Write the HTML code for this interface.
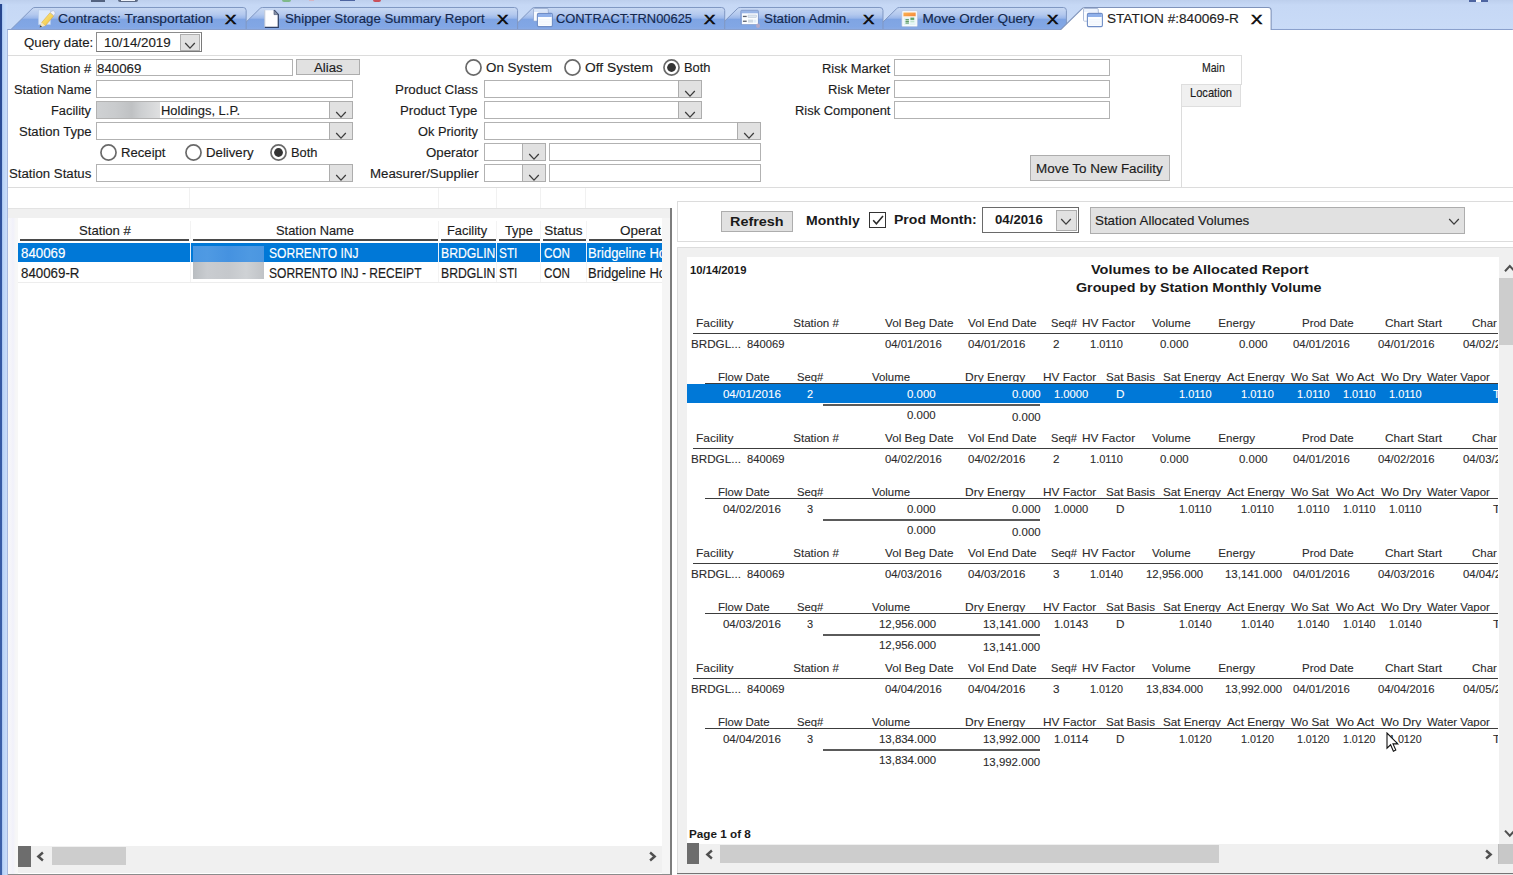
<!DOCTYPE html>
<html lang="en"><head><meta charset="utf-8"><title>STATION #:840069-R</title>
<style>
html,body{margin:0;padding:0}
body{width:1513px;height:875px;overflow:hidden;background:#fff;position:relative;font-family:"Liberation Sans", sans-serif;}
#app{position:absolute;left:0;top:0;width:1513px;height:875px;overflow:hidden;background:#fff}
#app div,#app svg{position:absolute;box-sizing:border-box}
.t{position:absolute;white-space:pre;transform-origin:0 0;-webkit-text-stroke:0.15px currentColor}
.inp{background:#fff;border:1px solid #b2b2b2}
.btn{background:#e1e1e1;border:1px solid #adadad}
.clip{overflow:hidden}
</style></head><body><div id="app">
<div style="left:0px;top:0px;width:1513px;height:30.4px;background:linear-gradient(#bdcfed 0,#c6d8f5 5px,#c9dbf7 30px)"></div>
<div style="left:0px;top:4px;width:1.6px;height:871px;background:linear-gradient(#27468f 0,#3357a2 300px,#3d61a9 871px)"></div>
<div style="left:1.6px;top:4px;width:6.4px;height:26px;background:linear-gradient(90deg,#a4c2f0 0,#bcd5f8 1.5px,#c8dcf9 4.5px,#cbd9f3 6.4px)"></div>
<div style="left:1.6px;top:30px;width:6.4px;height:845px;background:linear-gradient(90deg,#a4c2f0 0,#bcd5f8 1.5px,#c8dcf9 4.5px,#a5b6dc 5.6px,#8d9fc6 6.4px)"></div>
<div style="left:90.6px;top:0px;width:14.8px;height:1.5px;background:#53627f"></div>
<div style="left:118px;top:0px;width:20px;height:1.8px;background:#5d6a84;border-radius:0 0 6px 6px"></div>
<div style="left:121px;top:0px;width:14px;height:1px;background:#eef2fa"></div>
<div style="left:282px;top:0px;width:9.4px;height:1.6px;background:#7fb98a;border-radius:0 0 5px 5px"></div>
<div style="left:309.4px;top:0px;width:4.2px;height:1.2px;background:#d7b5c4"></div>
<div style="left:340px;top:0px;width:15px;height:1.4px;background:#4d64a0"></div>
<div style="left:372.8px;top:0px;width:8.5px;height:1.5px;background:#c9505a;border-radius:0 0 4px 4px"></div>
<div style="left:1468.5px;top:0px;width:19px;height:1.5px;background:#4d64a0"></div>
<div style="left:1476px;top:0px;width:5px;height:1.5px;background:#f2f5fb"></div>
<svg width="1513" height="30.4" viewBox="0 0 1513 30.4" style="left:0;top:0;overflow:hidden"><defs><linearGradient id="tg" x1="0" y1="0" x2="0" y2="1"><stop offset="0" stop-color="#cadaf3"/><stop offset="0.30" stop-color="#b4c9ee"/><stop offset="0.46" stop-color="#9cb8ea"/><stop offset="0.52" stop-color="#7fa4e3"/><stop offset="0.85" stop-color="#82a7e5"/><stop offset="1" stop-color="#8eaee6"/></linearGradient></defs><path d="M874.5,30.4 L896.5,8.8 Q897.5,7.5 899.5,7.5 H1063.5 Q1066.5,7.5 1066.5,10.5 V30.4 Z" fill="url(#tg)" stroke="#8097c2" stroke-width="1"/><path d="M715.2,30.4 L737.2,8.8 Q738.2,7.5 740.2,7.5 H880.0 Q883.0,7.5 883.0,10.5 V30.4 Z" fill="url(#tg)" stroke="#8097c2" stroke-width="1"/><path d="M509.8,30.4 L531.8,8.8 Q532.8,7.5 534.8,7.5 H721.7 Q724.7,7.5 724.7,10.5 V30.4 Z" fill="url(#tg)" stroke="#8097c2" stroke-width="1"/><path d="M237.5,30.4 L259.5,8.8 Q260.5,7.5 262.5,7.5 H514.5 Q517.5,7.5 517.5,10.5 V30.4 Z" fill="url(#tg)" stroke="#8097c2" stroke-width="1"/><path d="M9.8,30.4 L31.8,8.8 Q32.8,7.5 34.8,7.5 H243.0 Q246.0,7.5 246.0,10.5 V30.4 Z" fill="url(#tg)" stroke="#8097c2" stroke-width="1"/><rect x="7" y="29" width="1506" height="1.4" fill="#8aa0cc"/><path d="M1060.0,30.4 L1082.0,8.8 Q1083.0,7.5 1085.0,7.5 H1268.3 Q1271.3,7.5 1271.3,10.5 V30.4 Z" fill="#ffffff" stroke="none"/><path d="M1060.0,30.4 L1082.0,8.8 Q1083.0,7.5 1085.0,7.5 H1268.3 Q1271.3,7.5 1271.3,10.5 V30.4" fill="none" stroke="#7f93ba" stroke-width="1.1"/></svg>
<svg width="20" height="20" viewBox="0 0 20 20" style="left:36.5px;top:9px"><defs><linearGradient id="pg" x1="0" y1="0" x2="1" y2="1"><stop offset="0" stop-color="#f8e98a"/><stop offset="0.55" stop-color="#f5d35c"/><stop offset="1" stop-color="#eeb044"/></linearGradient></defs><rect x="1.6" y="0.9" width="11.8" height="14.6" fill="#dce9fb" stroke="#b9cdec" stroke-width="0.7"/><path d="M4.6,13.6 L13.2,3.6 L16.9,6.7 L8.3,16.8 Z" fill="url(#pg)" stroke="#d9a441" stroke-width="0.5"/><path d="M4.6,13.6 L8.3,16.8 L2.7,18.4 Z" fill="#f7e6b5"/><path d="M3.5,16.2 L5,17.7 L2.6,18.4 Z" fill="#3b3b3b"/><path d="M13.2,3.6 L14.9,1.9 Q16.8,1.3 17.9,2.9 Q18.7,4.6 16.9,6.7 Z" fill="#f4f5fa" stroke="#aeb6cc" stroke-width="0.6"/></svg>
<svg width="17" height="20" viewBox="0 0 17 20" style="left:263px;top:9px"><path d="M1.6,1.2 H11 L15.3,5.4 V18.4 H1.6 Z" fill="#fdfdff"/><path d="M1.8,1.2 V18.2" fill="none" stroke="#b4bccd" stroke-width="0.8"/><path d="M11.2,1.2 L15.3,5.4 V18.4 H1.8" fill="none" stroke="#2d3f66" stroke-width="1.25"/><path d="M11,1 V5.6 H15.3 Z" fill="#8a93a8" stroke="#3b4a6b" stroke-width="0.6"/></svg>
<svg width="21" height="20" viewBox="0 0 21 20" style="left:533.2px;top:7.9px"><rect x="0.5" y="0.5" width="14.8" height="12.6" rx="1.2" fill="rgba(226,237,252,0.7)" stroke="rgba(150,168,204,0.85)" stroke-width="0.9"/><rect x="1" y="4" width="13.8" height="8.6" fill="rgba(255,255,255,0.85)"/><rect x="4.4" y="5.4" width="15" height="13.2" rx="1.3" fill="#fbfdff" stroke="#6f8dc6" stroke-width="1.1"/><rect x="5" y="6" width="13.8" height="3" fill="#8fb0ea"/><path d="M6,11.8 H17.6 M6,14 H17.6 M6,16.2 H17.6" stroke="#e4ecf8" stroke-width="0.6"/></svg>
<svg width="21" height="20" viewBox="0 0 21 20" style="left:1083px;top:7.9px"><rect x="0.5" y="0.5" width="14.8" height="12.6" rx="1.2" fill="rgba(226,237,252,0.7)" stroke="rgba(150,168,204,0.85)" stroke-width="0.9"/><rect x="1" y="4" width="13.8" height="8.6" fill="rgba(255,255,255,0.85)"/><rect x="4.4" y="5.4" width="15" height="13.2" rx="1.3" fill="#fbfdff" stroke="#6f8dc6" stroke-width="1.1"/><rect x="5" y="6" width="13.8" height="3" fill="#8fb0ea"/><path d="M6,11.8 H17.6 M6,14 H17.6 M6,16.2 H17.6" stroke="#e4ecf8" stroke-width="0.6"/></svg>
<svg width="21" height="20" viewBox="0 0 21 20" style="left:740px;top:9px"><rect x="0.8" y="1.3" width="17.6" height="14.2" rx="1" fill="rgba(125,160,222,0.55)" stroke="#7d96c6" stroke-width="0.8"/><rect x="1.9" y="4.3" width="16" height="10.9" fill="#fbfdff"/><rect x="2.9" y="6.8" width="3.8" height="1.3" fill="#5d616e"/><rect x="8" y="6" width="8.4" height="2.6" fill="#dde6f1" stroke="#a9b6c8" stroke-width="0.4"/><rect x="2.9" y="11.6" width="3.8" height="1.3" fill="#5d616e"/><rect x="8" y="10.6" width="5" height="3" fill="#cfd9e4"/><rect x="13.4" y="10.6" width="3" height="3" fill="#e3eefa"/><ellipse cx="18" cy="16.8" rx="2" ry="2.2" fill="#c7a9bc" opacity="0.7"/></svg>
<svg width="18" height="19" viewBox="0 0 18 19" style="left:901px;top:9.5px"><defs><linearGradient id="og" x1="0" y1="0" x2="1" y2="1"><stop offset="0" stop-color="#fbb553"/><stop offset="1" stop-color="#f4853a"/></linearGradient></defs><rect x="0.9" y="0.7" width="15.4" height="15.9" rx="0.8" fill="#fdfeff" stroke="#b8c6e0" stroke-width="0.7"/><rect x="2.4" y="2.5" width="12.3" height="3.8" fill="url(#og)"/><rect x="2.4" y="6.3" width="12.3" height="0.9" fill="#fde3c4"/><rect x="2.6" y="7.6" width="12" height="7.6" fill="#e2f3f4"/><rect x="4.5" y="9" width="3.4" height="4.8" fill="#5f9b68"/><rect x="9.4" y="7.6" width="3.8" height="2.6" fill="#5fa46a"/><rect x="9.4" y="10.8" width="3.8" height="1.8" fill="#bfe3cf"/><path d="M2.6,10.4 H14.6 M2.6,12.8 H14.6 M8.6,7.6 V15.2" stroke="#f4fbfb" stroke-width="0.6"/></svg>
<div style="left:95.6px;top:31.8px;width:106.6px;height:20.4px;background:#fff;border:1px solid #7a7a7a;border-top-color:#8c8c8c;border-left-color:#8c8c8c"></div>
<div class="btn" style="left:179.5px;top:33.5px;width:20.5px;height:17.5px;"></div>
<svg width="12" height="8" viewBox="0 0 12 8" style="left:184px;top:41.5px"><path d="M1.2,1 L6,6.2 L10.8,1" fill="none" stroke="#3c3c3c" stroke-width="1.25"/></svg>
<div style="left:8px;top:54.5px;width:1234.2px;height:1px;background:#dcdcdc"></div>
<div style="left:1241.4px;top:54.5px;width:1px;height:29.5px;background:#dcdcdc"></div>
<div style="left:8px;top:186.5px;width:1505px;height:1px;background:#dcdcdc"></div>
<div style="left:1181px;top:83.5px;width:1px;height:103.5px;background:#dcdcdc"></div>
<div style="left:1181px;top:83.5px;width:61px;height:1px;background:#dcdcdc"></div>
<div style="left:1181px;top:83.5px;width:59.5px;height:23px;background:#f0f0f0;border:1px solid #dedede"></div>
<div class="inp" style="left:95.7px;top:58.7px;width:197.3px;height:17.8px;"></div>
<div class="btn" style="left:295.6px;top:58.7px;width:64.5px;height:16.5px;"></div>
<div class="inp" style="left:95.7px;top:80px;width:256.9px;height:17.8px;"></div>
<div class="inp" style="left:95.7px;top:101.2px;width:256.9px;height:17.8px;"></div>
<div class="btn" style="left:328.6px;top:101.2px;width:24px;height:17.8px;"></div>
<svg width="12" height="8" viewBox="0 0 12 8" style="left:334.6px;top:111.2px"><path d="M1.2,1 L6,6.2 L10.8,1" fill="none" stroke="#3c3c3c" stroke-width="1.25"/></svg>
<div style="left:96.7px;top:102.2px;width:63.5px;height:15.8px;background:linear-gradient(90deg,#cfd1d3 0,#c9cbcd 30%,#bfc1c3 55%,#cdcfd1 70%,#dfe0e1 100%)"></div>
<div class="inp" style="left:95.7px;top:122.4px;width:256.9px;height:17.8px;"></div>
<div class="btn" style="left:328.6px;top:122.4px;width:24px;height:17.8px;"></div>
<svg width="12" height="8" viewBox="0 0 12 8" style="left:334.6px;top:132.4px"><path d="M1.2,1 L6,6.2 L10.8,1" fill="none" stroke="#3c3c3c" stroke-width="1.25"/></svg>
<div class="inp" style="left:95.7px;top:164.4px;width:256.9px;height:17.8px;"></div>
<div class="btn" style="left:328.6px;top:164.4px;width:24px;height:17.8px;"></div>
<svg width="12" height="8" viewBox="0 0 12 8" style="left:334.6px;top:174.4px"><path d="M1.2,1 L6,6.2 L10.8,1" fill="none" stroke="#3c3c3c" stroke-width="1.25"/></svg>
<svg width="19" height="19" viewBox="0 0 19 19" style="left:99.0px;top:143.0px"><circle cx="9.5" cy="9.5" r="7.55" fill="#fff" stroke="#6a6a6a" stroke-width="1.7"/></svg>
<svg width="19" height="19" viewBox="0 0 19 19" style="left:184.2px;top:143.0px"><circle cx="9.5" cy="9.5" r="7.55" fill="#fff" stroke="#6a6a6a" stroke-width="1.7"/></svg>
<svg width="19" height="19" viewBox="0 0 19 19" style="left:269.4px;top:143.0px"><circle cx="9.5" cy="9.5" r="7.55" fill="#fff" stroke="#6a6a6a" stroke-width="1.7"/><circle cx="9.5" cy="9.5" r="4.4" fill="#333"/></svg>
<svg width="19" height="19" viewBox="0 0 19 19" style="left:464.2px;top:57.8px"><circle cx="9.5" cy="9.5" r="7.55" fill="#fff" stroke="#6a6a6a" stroke-width="1.7"/></svg>
<svg width="19" height="19" viewBox="0 0 19 19" style="left:562.8px;top:57.8px"><circle cx="9.5" cy="9.5" r="7.55" fill="#fff" stroke="#6a6a6a" stroke-width="1.7"/></svg>
<svg width="19" height="19" viewBox="0 0 19 19" style="left:661.6px;top:57.8px"><circle cx="9.5" cy="9.5" r="7.55" fill="#fff" stroke="#6a6a6a" stroke-width="1.7"/><circle cx="9.5" cy="9.5" r="4.4" fill="#333"/></svg>
<div class="inp" style="left:484.4px;top:80px;width:217.9px;height:17.8px;"></div>
<div class="btn" style="left:678.3px;top:80px;width:24px;height:17.8px;"></div>
<svg width="12" height="8" viewBox="0 0 12 8" style="left:684.3px;top:90.0px"><path d="M1.2,1 L6,6.2 L10.8,1" fill="none" stroke="#3c3c3c" stroke-width="1.25"/></svg>
<div class="inp" style="left:484.4px;top:101.2px;width:217.9px;height:17.8px;"></div>
<div class="btn" style="left:678.3px;top:101.2px;width:24px;height:17.8px;"></div>
<svg width="12" height="8" viewBox="0 0 12 8" style="left:684.3px;top:111.2px"><path d="M1.2,1 L6,6.2 L10.8,1" fill="none" stroke="#3c3c3c" stroke-width="1.25"/></svg>
<div class="inp" style="left:484.4px;top:122.4px;width:276.9px;height:17.8px;"></div>
<div class="btn" style="left:737.3px;top:122.4px;width:24px;height:17.8px;"></div>
<svg width="12" height="8" viewBox="0 0 12 8" style="left:743.3px;top:132.4px"><path d="M1.2,1 L6,6.2 L10.8,1" fill="none" stroke="#3c3c3c" stroke-width="1.25"/></svg>
<div class="inp" style="left:484.4px;top:143.3px;width:61.6px;height:17.8px;"></div>
<div class="btn" style="left:522px;top:143.3px;width:24px;height:17.8px;"></div>
<svg width="12" height="8" viewBox="0 0 12 8" style="left:528.0px;top:153.3px"><path d="M1.2,1 L6,6.2 L10.8,1" fill="none" stroke="#3c3c3c" stroke-width="1.25"/></svg>
<div class="inp" style="left:549px;top:143.3px;width:212.3px;height:17.8px;"></div>
<div class="inp" style="left:484.4px;top:164.4px;width:61.6px;height:17.8px;"></div>
<div class="btn" style="left:522px;top:164.4px;width:24px;height:17.8px;"></div>
<svg width="12" height="8" viewBox="0 0 12 8" style="left:528.0px;top:174.4px"><path d="M1.2,1 L6,6.2 L10.8,1" fill="none" stroke="#3c3c3c" stroke-width="1.25"/></svg>
<div class="inp" style="left:549px;top:164.4px;width:212.3px;height:17.8px;"></div>
<div class="inp" style="left:894.2px;top:58.7px;width:215.8px;height:17.8px;"></div>
<div class="inp" style="left:894.2px;top:80px;width:215.8px;height:17.8px;"></div>
<div class="inp" style="left:894.2px;top:101.2px;width:215.8px;height:17.8px;"></div>
<div class="btn" style="left:1029.7px;top:154.7px;width:140.5px;height:26.8px;"></div>
<div style="left:188.5px;top:187.5px;width:1px;height:21px;background:#f1f1f1"></div>
<div style="left:437.5px;top:187.5px;width:1px;height:21px;background:#f1f1f1"></div>
<div style="left:495.5px;top:187.5px;width:1px;height:21px;background:#f1f1f1"></div>
<div style="left:539.5px;top:187.5px;width:1px;height:21px;background:#f1f1f1"></div>
<div style="left:584.5px;top:187.5px;width:1px;height:21px;background:#f1f1f1"></div>
<div style="left:8px;top:208px;width:662px;height:665px;background:#f0f0f0;border-top:1px solid #e3e3e3"></div>
<div style="left:17.5px;top:218px;width:644.6px;height:628px;background:#fff"></div>
<div style="left:662.1px;top:218px;width:7.7px;height:656px;background:#f5f5f5"></div>
<div style="left:8px;top:218px;width:9.5px;height:656px;background:linear-gradient(90deg,#f7f7f7 0,#f4f4fa 3px,#f1f1fa 5px,#f7f7f7 8px)"></div>
<div style="left:669.8px;top:208px;width:2px;height:667px;background:#7d7d7d"></div>
<div style="left:20px;top:239px;width:169.3px;height:2px;background:#4a4a4a"></div>
<div style="left:192.7px;top:239px;width:245.1px;height:2px;background:#4a4a4a"></div>
<div style="left:441px;top:239px;width:54.6px;height:2px;background:#4a4a4a"></div>
<div style="left:498.6px;top:239px;width:41.4px;height:2px;background:#4a4a4a"></div>
<div style="left:543px;top:239px;width:42.5px;height:2px;background:#4a4a4a"></div>
<div style="left:588.8px;top:239px;width:73.7px;height:2px;background:#4a4a4a"></div>
<div style="left:17.5px;top:243px;width:644.6px;height:19px;background:#0078d7"></div>
<div style="left:189.6px;top:243px;width:1.2px;height:19px;background:#e8f1fb"></div>
<div style="left:189.6px;top:221px;width:1px;height:18px;background:#f3f3f3"></div>
<div style="left:189.6px;top:262px;width:1px;height:20px;background:#f3f3f3"></div>
<div style="left:438.2px;top:243px;width:1.2px;height:19px;background:#e8f1fb"></div>
<div style="left:438.2px;top:221px;width:1px;height:18px;background:#f3f3f3"></div>
<div style="left:438.2px;top:262px;width:1px;height:20px;background:#f3f3f3"></div>
<div style="left:495.8px;top:243px;width:1.2px;height:19px;background:#e8f1fb"></div>
<div style="left:495.8px;top:221px;width:1px;height:18px;background:#f3f3f3"></div>
<div style="left:495.8px;top:262px;width:1px;height:20px;background:#f3f3f3"></div>
<div style="left:540.3px;top:243px;width:1.2px;height:19px;background:#e8f1fb"></div>
<div style="left:540.3px;top:221px;width:1px;height:18px;background:#f3f3f3"></div>
<div style="left:540.3px;top:262px;width:1px;height:20px;background:#f3f3f3"></div>
<div style="left:585.8px;top:243px;width:1.2px;height:19px;background:#e8f1fb"></div>
<div style="left:585.8px;top:221px;width:1px;height:18px;background:#f3f3f3"></div>
<div style="left:585.8px;top:262px;width:1px;height:20px;background:#f3f3f3"></div>
<div style="left:17.5px;top:282px;width:644.6px;height:1px;background:#ededed"></div>
<div style="left:192.5px;top:246px;width:71.2px;height:15.5px;background:linear-gradient(90deg,#4b97e2 0,#4f9ae3 20%,#4592e0 50%,#4e99e2 80%,#4a96e1 100%)"></div>
<div style="left:192.5px;top:262px;width:71.2px;height:16.6px;background:linear-gradient(90deg,#b9bdc1 0,#c9ccd0 20%,#c5c8cc 50%,#cfd2d5 75%,#c0c3c7 100%)"></div>
<div style="left:17.5px;top:846px;width:644.6px;height:20.5px;background:#f0f0f0"></div>
<div style="left:18px;top:845.8px;width:12.6px;height:20.8px;background:#6d6d6d"></div>
<div style="left:51.9px;top:846.9px;width:74.6px;height:18.2px;background:#cdcdcd"></div>
<svg width="9" height="11" viewBox="0 0 9 11" style="left:36px;top:850.6px"><path d="M6.9,1.5 L2.3,5.5 L6.9,9.5" fill="none" stroke="#505050" stroke-width="2.4"/></svg>
<svg width="9" height="11" viewBox="0 0 9 11" style="left:647.5px;top:851px"><path d="M2.1,1.5 L6.7,5.5 L2.1,9.5" fill="none" stroke="#505050" stroke-width="2.4"/></svg>
<div style="left:677.4px;top:201px;width:840px;height:40.6px;background:#fff;border:1px solid #dcdcdc;border-right:none"></div>
<div class="btn" style="left:720.5px;top:211.3px;width:72.3px;height:20.3px;"></div>
<div style="left:869.3px;top:212px;width:16.3px;height:16.3px;background:#fff;border:1px solid #333"></div>
<svg width="16" height="16" viewBox="0 0 16 16" style="left:869.5px;top:212.2px"><path d="M3.2,8.2 L6.4,11.8 L13,4" fill="none" stroke="#2a2a2a" stroke-width="1.55"/></svg>
<div style="left:982px;top:207.4px;width:97px;height:25.4px;background:#fff;border:1px solid #6a6a6a"></div>
<div class="btn" style="left:1055.8px;top:209.8px;width:20.8px;height:20.8px;"></div>
<svg width="12" height="8" viewBox="0 0 12 8" style="left:1060.2px;top:217.5px"><path d="M1.2,1 L6,6.2 L10.8,1" fill="none" stroke="#3c3c3c" stroke-width="1.25"/></svg>
<div class="btn" style="left:1089.5px;top:207.4px;width:375.5px;height:26.6px;"></div>
<svg width="12" height="8" viewBox="0 0 12 8" style="left:1447.5px;top:217.8px"><path d="M1.2,1 L6,6.2 L10.8,1" fill="none" stroke="#3c3c3c" stroke-width="1.25"/></svg>
<div style="left:677.4px;top:247.3px;width:840px;height:626px;background:#f0f0f0;border:1px solid #dcdcdc;border-right:none;border-bottom:none"></div>
<div style="left:686.6px;top:257.3px;width:812.2px;height:586.6px;background:#fff"></div>
<div style="left:1498.5px;top:257.3px;width:15px;height:586px;background:#f0f0f0"></div>
<div style="left:1499.2px;top:278.2px;width:14.5px;height:66.8px;background:#cdcdcd"></div>
<svg width="12" height="9" viewBox="0 0 12 9" style="left:1503.5px;top:263.5px"><path d="M1,7.2 L5.8,2 L10.6,7.2" fill="none" stroke="#505050" stroke-width="2"/></svg>
<svg width="12" height="9" viewBox="0 0 12 9" style="left:1503.5px;top:828.5px"><path d="M1,1.6 L5.8,6.8 L10.6,1.6" fill="none" stroke="#505050" stroke-width="2"/></svg>
<div style="left:686.6px;top:844px;width:812px;height:20px;background:#f0f0f0"></div>
<div style="left:687px;top:843.2px;width:12px;height:20.6px;background:#6d6d6d"></div>
<div style="left:720.3px;top:844.6px;width:498.6px;height:18.2px;background:#cdcdcd"></div>
<svg width="9" height="11" viewBox="0 0 9 11" style="left:704.5px;top:848.5px"><path d="M6.9,1.5 L2.3,5.5 L6.9,9.5" fill="none" stroke="#505050" stroke-width="2.4"/></svg>
<svg width="9" height="11" viewBox="0 0 9 11" style="left:1483.5px;top:848.5px"><path d="M2.1,1.5 L6.7,5.5 L2.1,9.5" fill="none" stroke="#505050" stroke-width="2.4"/></svg>
<div style="left:1498.2px;top:843.5px;width:15px;height:20.5px;background:#c8c8c8;border-left:1px solid #bcbcbc"></div>
<div style="left:8px;top:873.6px;width:662px;height:1.4px;background:#8c8c8c"></div>
<div style="left:677.4px;top:872.7px;width:836px;height:1.5px;background:#747474"></div>
<div style="left:677.4px;top:874.2px;width:836px;height:0.8px;background:#e9e9e9"></div>
<div style="left:693px;top:333.4px;width:805px;height:1.1px;background:#3c3c3c"></div>
<div style="left:686.6px;top:384.2px;width:811.4px;height:18.4px;background:#0078d7"></div>
<div style="left:705px;top:383.2px;width:793px;height:1.1px;background:#3c3c3c"></div>
<div style="left:823px;top:404.4px;width:217.3px;height:1.4px;background:#5a5a5a"></div>
<div style="left:693px;top:448.4px;width:805px;height:1.1px;background:#3c3c3c"></div>
<div style="left:705px;top:498.2px;width:793px;height:1.1px;background:#3c3c3c"></div>
<div style="left:823px;top:519.4px;width:217.3px;height:1.4px;background:#5a5a5a"></div>
<div style="left:693px;top:563.4px;width:805px;height:1.1px;background:#3c3c3c"></div>
<div style="left:705px;top:613.2px;width:793px;height:1.1px;background:#3c3c3c"></div>
<div style="left:823px;top:634.4px;width:217.3px;height:1.4px;background:#5a5a5a"></div>
<div style="left:693px;top:678.4px;width:805px;height:1.1px;background:#3c3c3c"></div>
<div style="left:705px;top:728.2px;width:793px;height:1.1px;background:#3c3c3c"></div>
<div style="left:823px;top:749.4px;width:217.3px;height:1.4px;background:#5a5a5a"></div>
<span class="t" style="left:57.70px;top:10.26px;font-size:13.5px;line-height:17px;color:#14284d;transform:scaleX(1.0232);">Contracts: Transportation</span>
<span class="t" style="left:285.00px;top:10.26px;font-size:13.5px;line-height:17px;color:#14284d;transform:scaleX(0.9816);">Shipper Storage Summary Report</span>
<span class="t" style="left:556.40px;top:10.26px;font-size:13.5px;line-height:17px;color:#14284d;transform:scaleX(0.9541);">CONTRACT:TRN00625</span>
<span class="t" style="left:763.70px;top:10.26px;font-size:13.5px;line-height:17px;color:#14284d;transform:scaleX(0.9878);">Station Admin.</span>
<span class="t" style="left:922.50px;top:10.26px;font-size:13.5px;line-height:17px;color:#14284d;">Move Order Query</span>
<span class="t" style="left:1106.60px;top:10.26px;font-size:13.5px;line-height:17px;color:#1e1e1e;transform:scaleX(1.0075);">STATION #:840069-R</span>
<span class="t" style="left:225.45px;top:11.74px;font-size:12.6px;line-height:16px;color:#0a0a0a;transform:scaleX(1.3500);-webkit-text-stroke:0.5px #0a0a0a;">X</span>
<span class="t" style="left:496.70px;top:11.74px;font-size:12.6px;line-height:16px;color:#0a0a0a;transform:scaleX(1.3500);-webkit-text-stroke:0.5px #0a0a0a;">X</span>
<span class="t" style="left:704.10px;top:11.74px;font-size:12.6px;line-height:16px;color:#0a0a0a;transform:scaleX(1.3500);-webkit-text-stroke:0.5px #0a0a0a;">X</span>
<span class="t" style="left:863.30px;top:11.74px;font-size:12.6px;line-height:16px;color:#0a0a0a;transform:scaleX(1.3500);-webkit-text-stroke:0.5px #0a0a0a;">X</span>
<span class="t" style="left:1047.00px;top:11.74px;font-size:12.6px;line-height:16px;color:#0a0a0a;transform:scaleX(1.3500);-webkit-text-stroke:0.5px #0a0a0a;">X</span>
<span class="t" style="left:1250.50px;top:11.74px;font-size:12.6px;line-height:16px;color:#0a0a0a;transform:scaleX(1.3500);-webkit-text-stroke:0.5px #0a0a0a;">X</span>
<span class="t" style="left:23.70px;top:33.66px;font-size:13.7px;line-height:17px;color:#1c1c1c;transform:scaleX(0.9688);">Query date:</span>
<span class="t" style="left:104.00px;top:33.96px;font-size:13.7px;line-height:17px;color:#1c1c1c;transform:scaleX(0.9735);">10/14/2019</span>
<span class="t" style="left:1202.00px;top:61.24px;font-size:12.2px;line-height:15px;color:#1c1c1c;transform:scaleX(0.8629);">Main</span>
<span class="t" style="left:1190.00px;top:86.44px;font-size:12.2px;line-height:15px;color:#1c1c1c;transform:scaleX(0.9115);">Location</span>
<span class="t" style="left:40.00px;top:59.66px;font-size:13.7px;line-height:17px;color:#1c1c1c;transform:scaleX(0.9476);">Station #</span>
<span class="t" style="left:97.40px;top:59.66px;font-size:13.7px;line-height:17px;color:#1c1c1c;transform:scaleX(0.9696);">840069</span>
<span class="t" style="left:313.60px;top:58.66px;font-size:13.7px;line-height:17px;color:#1c1c1c;transform:scaleX(0.9672);">Alias</span>
<span class="t" style="left:13.70px;top:80.96px;font-size:13.7px;line-height:17px;color:#1c1c1c;transform:scaleX(0.9344);">Station Name</span>
<span class="t" style="left:51.00px;top:102.16px;font-size:13.7px;line-height:17px;color:#1c1c1c;transform:scaleX(0.9391);">Facility</span>
<span class="t" style="left:161.00px;top:102.16px;font-size:13.7px;line-height:17px;color:#1c1c1c;transform:scaleX(0.9466);">Holdings, L.P.</span>
<span class="t" style="left:18.50px;top:123.36px;font-size:13.7px;line-height:17px;color:#1c1c1c;transform:scaleX(0.9559);">Station Type</span>
<span class="t" style="left:8.70px;top:165.36px;font-size:13.7px;line-height:17px;color:#1c1c1c;transform:scaleX(0.9656);">Station Status</span>
<span class="t" style="left:121.00px;top:144.26px;font-size:13.7px;line-height:17px;color:#1c1c1c;transform:scaleX(0.9586);">Receipt</span>
<span class="t" style="left:206.00px;top:144.26px;font-size:13.7px;line-height:17px;color:#1c1c1c;transform:scaleX(0.9649);">Delivery</span>
<span class="t" style="left:291.00px;top:144.26px;font-size:13.7px;line-height:17px;color:#1c1c1c;transform:scaleX(0.9407);">Both</span>
<span class="t" style="left:486.00px;top:59.26px;font-size:13.7px;line-height:17px;color:#1c1c1c;transform:scaleX(0.9748);">On System</span>
<span class="t" style="left:585.00px;top:59.26px;font-size:13.7px;line-height:17px;color:#1c1c1c;transform:scaleX(1.0081);">Off System</span>
<span class="t" style="left:683.50px;top:59.26px;font-size:13.7px;line-height:17px;color:#1c1c1c;transform:scaleX(0.9407);">Both</span>
<span class="t" style="left:394.50px;top:80.96px;font-size:13.7px;line-height:17px;color:#1c1c1c;transform:scaleX(0.9730);">Product Class</span>
<span class="t" style="left:400.00px;top:102.16px;font-size:13.7px;line-height:17px;color:#1c1c1c;transform:scaleX(0.9626);">Product Type</span>
<span class="t" style="left:417.50px;top:123.36px;font-size:13.7px;line-height:17px;color:#1c1c1c;transform:scaleX(0.9375);">Ok Priority</span>
<span class="t" style="left:426.30px;top:144.26px;font-size:13.7px;line-height:17px;color:#1c1c1c;transform:scaleX(0.9682);">Operator</span>
<span class="t" style="left:370.00px;top:165.36px;font-size:13.7px;line-height:17px;color:#1c1c1c;transform:scaleX(0.9710);">Measurer/Supplier</span>
<span class="t" style="left:822.20px;top:59.66px;font-size:13.7px;line-height:17px;color:#1c1c1c;transform:scaleX(0.9439);">Risk Market</span>
<span class="t" style="left:828.20px;top:80.96px;font-size:13.7px;line-height:17px;color:#1c1c1c;transform:scaleX(0.9510);">Risk Meter</span>
<span class="t" style="left:795.00px;top:102.16px;font-size:13.7px;line-height:17px;color:#1c1c1c;transform:scaleX(0.9428);">Risk Component</span>
<span class="t" style="left:1036.30px;top:159.96px;font-size:13.7px;line-height:17px;color:#1c1c1c;transform:scaleX(0.9817);">Move To New Facility</span>
<span class="t" style="left:78.60px;top:222.26px;font-size:13.5px;line-height:17px;color:#1c1c1c;transform:scaleX(0.9738);">Station #</span>
<span class="t" style="left:276.00px;top:222.26px;font-size:13.5px;line-height:17px;color:#1c1c1c;transform:scaleX(0.9536);">Station Name</span>
<span class="t" style="left:447.40px;top:222.26px;font-size:13.5px;line-height:17px;color:#1c1c1c;transform:scaleX(0.9544);">Facility</span>
<span class="t" style="left:504.70px;top:222.26px;font-size:13.5px;line-height:17px;color:#1c1c1c;transform:scaleX(0.9494);">Type</span>
<span class="t" style="left:544.30px;top:222.26px;font-size:13.5px;line-height:17px;color:#1c1c1c;">Status</span>
<div class="clip" style="left:587px;top:221px;width:74.20000000000005px;height:22px"><span class="t" style="left:32.90px;top:1.26px;font-size:13.5px;line-height:17px;color:#1c1c1c;">Operator</span></div>
<span class="t" style="left:20.70px;top:244.86px;font-size:13.8px;line-height:17px;color:#ffffff;transform:scaleX(0.9642);">840069</span>
<span class="t" style="left:268.70px;top:244.86px;font-size:13.8px;line-height:17px;color:#ffffff;transform:scaleX(0.8744);">SORRENTO INJ</span>
<div class="clip" style="left:440px;top:243.2px;width:55.39999999999998px;height:20.0px"><span class="t" style="left:0.90px;top:1.66px;font-size:13.8px;line-height:17px;color:#ffffff;transform:scaleX(0.8874);">BRDGLINE</span></div>
<span class="t" style="left:498.60px;top:244.86px;font-size:13.8px;line-height:17px;color:#ffffff;transform:scaleX(0.8571);">STI</span>
<span class="t" style="left:543.60px;top:244.86px;font-size:13.8px;line-height:17px;color:#ffffff;transform:scaleX(0.8444);">CON</span>
<div class="clip" style="left:587px;top:243.2px;width:75px;height:20.0px"><span class="t" style="left:1.40px;top:1.66px;font-size:13.8px;line-height:17px;color:#ffffff;transform:scaleX(0.9429);">Bridgeline Holdings</span></div>
<span class="t" style="left:20.70px;top:264.86px;font-size:13.8px;line-height:17px;color:#1c1c1c;transform:scaleX(0.9652);">840069-R</span>
<span class="t" style="left:268.70px;top:264.86px;font-size:13.8px;line-height:17px;color:#1c1c1c;transform:scaleX(0.8738);">SORRENTO INJ - RECEIPT</span>
<div class="clip" style="left:440px;top:263.2px;width:55.39999999999998px;height:20.0px"><span class="t" style="left:0.90px;top:1.66px;font-size:13.8px;line-height:17px;color:#1c1c1c;transform:scaleX(0.8874);">BRDGLINE</span></div>
<span class="t" style="left:498.60px;top:264.86px;font-size:13.8px;line-height:17px;color:#1c1c1c;transform:scaleX(0.8571);">STI</span>
<span class="t" style="left:543.60px;top:264.86px;font-size:13.8px;line-height:17px;color:#1c1c1c;transform:scaleX(0.8444);">CON</span>
<div class="clip" style="left:587px;top:263.2px;width:75px;height:20.0px"><span class="t" style="left:1.40px;top:1.66px;font-size:13.8px;line-height:17px;color:#1c1c1c;transform:scaleX(0.9429);">Bridgeline Holdings</span></div>
<span class="t" style="left:729.60px;top:214.15px;font-size:13px;line-height:16px;color:#1a1a1a;font-weight:bold;transform:scaleX(1.1069);-webkit-text-stroke:0;">Refresh</span>
<span class="t" style="left:806.00px;top:212.85px;font-size:13px;line-height:16px;color:#1a1a1a;font-weight:bold;transform:scaleX(1.0777);-webkit-text-stroke:0;">Monthly</span>
<span class="t" style="left:893.90px;top:211.95px;font-size:13px;line-height:16px;color:#1a1a1a;font-weight:bold;transform:scaleX(1.0804);-webkit-text-stroke:0;">Prod Month:</span>
<span class="t" style="left:994.70px;top:211.95px;font-size:13px;line-height:16px;color:#1a1a1a;font-weight:bold;transform:scaleX(1.0170);-webkit-text-stroke:0;">04/2016</span>
<span class="t" style="left:1094.70px;top:213.15px;font-size:13px;line-height:16px;color:#1c1c1c;transform:scaleX(1.0264);">Station Allocated Volumes</span>
<span class="t" style="left:690.00px;top:262.64px;font-size:11.8px;line-height:15px;color:#1a1a1a;font-weight:bold;transform:scaleX(0.9552);-webkit-text-stroke:0;">10/14/2019</span>
<span class="t" style="left:1090.50px;top:261.75px;font-size:13px;line-height:16px;color:#1a1a1a;font-weight:bold;transform:scaleX(1.1152);-webkit-text-stroke:0;">Volumes to be Allocated Report</span>
<span class="t" style="left:1075.50px;top:279.65px;font-size:13px;line-height:16px;color:#1a1a1a;font-weight:bold;transform:scaleX(1.0977);-webkit-text-stroke:0;">Grouped by Station Monthly Volume</span>
<span class="t" style="left:688.60px;top:827.03px;font-size:11.5px;line-height:14px;color:#1a1a1a;font-weight:bold;transform:scaleX(1.0178);-webkit-text-stroke:0;">Page 1 of 8</span>
<span class="t" style="left:696.30px;top:316.33px;font-size:11.6px;line-height:14px;color:#2b2b2b;transform:scaleX(1.0366);-webkit-text-stroke:0.1px currentColor;">Facility</span>
<span class="t" style="left:793.20px;top:316.33px;font-size:11.6px;line-height:14px;color:#2b2b2b;-webkit-text-stroke:0.1px currentColor;">Station #</span>
<span class="t" style="left:884.50px;top:316.33px;font-size:11.6px;line-height:14px;color:#2b2b2b;transform:scaleX(1.0120);-webkit-text-stroke:0.1px currentColor;">Vol Beg Date</span>
<span class="t" style="left:968.10px;top:316.33px;font-size:11.6px;line-height:14px;color:#2b2b2b;transform:scaleX(1.0120);-webkit-text-stroke:0.1px currentColor;">Vol End Date</span>
<span class="t" style="left:1050.90px;top:316.33px;font-size:11.6px;line-height:14px;color:#2b2b2b;transform:scaleX(0.9565);-webkit-text-stroke:0.1px currentColor;">Seq#</span>
<span class="t" style="left:1082.30px;top:316.33px;font-size:11.6px;line-height:14px;color:#2b2b2b;transform:scaleX(1.0175);-webkit-text-stroke:0.1px currentColor;">HV Factor</span>
<span class="t" style="left:1152.00px;top:316.33px;font-size:11.6px;line-height:14px;color:#2b2b2b;-webkit-text-stroke:0.1px currentColor;">Volume</span>
<span class="t" style="left:1218.30px;top:316.33px;font-size:11.6px;line-height:14px;color:#2b2b2b;-webkit-text-stroke:0.1px currentColor;">Energy</span>
<span class="t" style="left:1302.30px;top:316.33px;font-size:11.6px;line-height:14px;color:#2b2b2b;transform:scaleX(0.9904);-webkit-text-stroke:0.1px currentColor;">Prod Date</span>
<span class="t" style="left:1384.60px;top:316.33px;font-size:11.6px;line-height:14px;color:#2b2b2b;transform:scaleX(1.0185);-webkit-text-stroke:0.1px currentColor;">Chart Start</span>
<div class="clip" style="left:1460px;top:314.2px;width:37.200000000000045px;height:18.0px"><span class="t" style="left:12.30px;top:2.13px;font-size:11.6px;line-height:14px;color:#2b2b2b;transform:scaleX(0.9904);-webkit-text-stroke:0.1px currentColor;">Chart End</span></div>
<span class="t" style="left:691.10px;top:337.13px;font-size:11.6px;line-height:14px;color:#2b2b2b;transform:scaleX(1.0059);-webkit-text-stroke:0.1px currentColor;">BRDGL...</span>
<span class="t" style="left:746.60px;top:337.13px;font-size:11.6px;line-height:14px;color:#2b2b2b;transform:scaleX(0.9667);-webkit-text-stroke:0.1px currentColor;">840069</span>
<span class="t" style="left:884.50px;top:337.13px;font-size:11.6px;line-height:14px;color:#2b2b2b;transform:scaleX(0.9788);-webkit-text-stroke:0.1px currentColor;">04/01/2016</span>
<span class="t" style="left:968.10px;top:337.13px;font-size:11.6px;line-height:14px;color:#2b2b2b;transform:scaleX(0.9891);-webkit-text-stroke:0.1px currentColor;">04/01/2016</span>
<span class="t" style="left:1052.70px;top:337.13px;font-size:11.6px;line-height:14px;color:#2b2b2b;transform:scaleX(1.0073);-webkit-text-stroke:0.1px currentColor;">2</span>
<span class="t" style="left:1090.00px;top:337.13px;font-size:11.6px;line-height:14px;color:#2b2b2b;transform:scaleX(0.9535);-webkit-text-stroke:0.1px currentColor;">1.0110</span>
<span class="t" style="left:1159.90px;top:337.13px;font-size:11.6px;line-height:14px;color:#2b2b2b;transform:scaleX(0.9857);-webkit-text-stroke:0.1px currentColor;">0.000</span>
<span class="t" style="left:1239.20px;top:337.13px;font-size:11.6px;line-height:14px;color:#2b2b2b;transform:scaleX(0.9857);-webkit-text-stroke:0.1px currentColor;">0.000</span>
<span class="t" style="left:1293.20px;top:337.13px;font-size:11.6px;line-height:14px;color:#2b2b2b;transform:scaleX(0.9805);-webkit-text-stroke:0.1px currentColor;">04/01/2016</span>
<span class="t" style="left:1378.40px;top:337.13px;font-size:11.6px;line-height:14px;color:#2b2b2b;transform:scaleX(0.9753);-webkit-text-stroke:0.1px currentColor;">04/01/2016</span>
<div class="clip" style="left:1455px;top:335px;width:43px;height:18px"><span class="t" style="left:8.00px;top:2.13px;font-size:11.6px;line-height:14px;color:#2b2b2b;transform:scaleX(0.9822);-webkit-text-stroke:0.1px currentColor;">04/02/2016</span></div>
<div class="clip" style="left:686.6px;top:366.4px;width:811.4px;height:15.600000000000023px"><span class="t" style="left:31.90px;top:3.13px;font-size:11.6px;line-height:14px;color:#2b2b2b;transform:scaleX(0.9884);-webkit-text-stroke:0.1px currentColor;">Flow Date</span></div>
<div class="clip" style="left:686.6px;top:366.4px;width:811.4px;height:15.600000000000023px"><span class="t" style="left:110.40px;top:3.13px;font-size:11.6px;line-height:14px;color:#2b2b2b;transform:scaleX(0.9750);-webkit-text-stroke:0.1px currentColor;">Seq#</span></div>
<div class="clip" style="left:686.6px;top:366.4px;width:811.4px;height:15.600000000000023px"><span class="t" style="left:185.80px;top:3.13px;font-size:11.6px;line-height:14px;color:#2b2b2b;transform:scaleX(0.9826);-webkit-text-stroke:0.1px currentColor;">Volume</span></div>
<div class="clip" style="left:686.6px;top:366.4px;width:811.4px;height:15.600000000000023px"><span class="t" style="left:278.20px;top:3.13px;font-size:11.6px;line-height:14px;color:#2b2b2b;transform:scaleX(1.0379);-webkit-text-stroke:0.1px currentColor;">Dry Energy</span></div>
<div class="clip" style="left:686.6px;top:366.4px;width:811.4px;height:15.600000000000023px"><span class="t" style="left:356.80px;top:3.13px;font-size:11.6px;line-height:14px;color:#2b2b2b;transform:scaleX(1.0213);-webkit-text-stroke:0.1px currentColor;">HV Factor</span></div>
<div class="clip" style="left:686.6px;top:366.4px;width:811.4px;height:15.600000000000023px"><span class="t" style="left:419.40px;top:3.13px;font-size:11.6px;line-height:14px;color:#2b2b2b;-webkit-text-stroke:0.1px currentColor;">Sat Basis</span></div>
<div class="clip" style="left:686.6px;top:366.4px;width:811.4px;height:15.600000000000023px"><span class="t" style="left:476.60px;top:3.13px;font-size:11.6px;line-height:14px;color:#2b2b2b;transform:scaleX(1.0094);-webkit-text-stroke:0.1px currentColor;">Sat Energy</span></div>
<div class="clip" style="left:686.6px;top:366.4px;width:811.4px;height:15.600000000000023px"><span class="t" style="left:540.60px;top:3.13px;font-size:11.6px;line-height:14px;color:#2b2b2b;transform:scaleX(1.0173);-webkit-text-stroke:0.1px currentColor;">Act Energy</span></div>
<div class="clip" style="left:686.6px;top:366.4px;width:811.4px;height:15.600000000000023px"><span class="t" style="left:604.10px;top:3.13px;font-size:11.6px;line-height:14px;color:#2b2b2b;transform:scaleX(1.0076);-webkit-text-stroke:0.1px currentColor;">Wo Sat</span></div>
<div class="clip" style="left:686.6px;top:366.4px;width:811.4px;height:15.600000000000023px"><span class="t" style="left:649.20px;top:3.13px;font-size:11.6px;line-height:14px;color:#2b2b2b;transform:scaleX(1.0461);-webkit-text-stroke:0.1px currentColor;">Wo Act</span></div>
<div class="clip" style="left:686.6px;top:366.4px;width:811.4px;height:15.600000000000023px"><span class="t" style="left:694.50px;top:3.13px;font-size:11.6px;line-height:14px;color:#2b2b2b;transform:scaleX(1.0485);-webkit-text-stroke:0.1px currentColor;">Wo Dry</span></div>
<div class="clip" style="left:686.6px;top:366.4px;width:811.4px;height:15.600000000000023px"><span class="t" style="left:740.60px;top:3.13px;font-size:11.6px;line-height:14px;color:#2b2b2b;transform:scaleX(0.9859);-webkit-text-stroke:0.1px currentColor;">Water Vapor</span></div>
<span class="t" style="left:722.90px;top:386.93px;font-size:11.6px;line-height:14px;color:#ffffff;-webkit-text-stroke:0.1px currentColor;">04/01/2016</span>
<span class="t" style="left:806.80px;top:386.93px;font-size:11.6px;line-height:14px;color:#ffffff;transform:scaleX(0.9453);-webkit-text-stroke:0.1px currentColor;">2</span>
<span class="t" style="left:907.30px;top:386.93px;font-size:11.6px;line-height:14px;color:#ffffff;transform:scaleX(0.9857);-webkit-text-stroke:0.1px currentColor;">0.000</span>
<span class="t" style="left:1011.70px;top:386.93px;font-size:11.6px;line-height:14px;color:#ffffff;transform:scaleX(0.9857);-webkit-text-stroke:0.1px currentColor;">0.000</span>
<span class="t" style="left:1053.60px;top:386.93px;font-size:11.6px;line-height:14px;color:#ffffff;transform:scaleX(0.9670);-webkit-text-stroke:0.1px currentColor;">1.0000</span>
<span class="t" style="left:1116.00px;top:386.93px;font-size:11.6px;line-height:14px;color:#ffffff;transform:scaleX(1.0149);-webkit-text-stroke:0.1px currentColor;">D</span>
<span class="t" style="left:1179.10px;top:386.93px;font-size:11.6px;line-height:14px;color:#ffffff;transform:scaleX(0.9448);-webkit-text-stroke:0.1px currentColor;">1.0110</span>
<span class="t" style="left:1241.30px;top:386.93px;font-size:11.6px;line-height:14px;color:#ffffff;transform:scaleX(0.9506);-webkit-text-stroke:0.1px currentColor;">1.0110</span>
<span class="t" style="left:1296.90px;top:386.93px;font-size:11.6px;line-height:14px;color:#ffffff;transform:scaleX(0.9391);-webkit-text-stroke:0.1px currentColor;">1.0110</span>
<span class="t" style="left:1343.00px;top:386.93px;font-size:11.6px;line-height:14px;color:#ffffff;transform:scaleX(0.9391);-webkit-text-stroke:0.1px currentColor;">1.0110</span>
<span class="t" style="left:1389.10px;top:386.93px;font-size:11.6px;line-height:14px;color:#ffffff;transform:scaleX(0.9448);-webkit-text-stroke:0.1px currentColor;">1.0110</span>
<div class="clip" style="left:1488px;top:384.8px;width:10px;height:18.0px"><span class="t" style="left:5.00px;top:2.13px;font-size:11.6px;line-height:14px;color:#ffffff;transform:scaleX(1.0291);-webkit-text-stroke:0.1px currentColor;">T</span></div>
<span class="t" style="left:907.30px;top:408.33px;font-size:11.6px;line-height:14px;color:#2b2b2b;transform:scaleX(0.9857);-webkit-text-stroke:0.1px currentColor;">0.000</span>
<span class="t" style="left:1011.70px;top:409.73px;font-size:11.6px;line-height:14px;color:#2b2b2b;transform:scaleX(0.9857);-webkit-text-stroke:0.1px currentColor;">0.000</span>
<span class="t" style="left:696.30px;top:431.33px;font-size:11.6px;line-height:14px;color:#2b2b2b;transform:scaleX(1.0366);-webkit-text-stroke:0.1px currentColor;">Facility</span>
<span class="t" style="left:793.20px;top:431.33px;font-size:11.6px;line-height:14px;color:#2b2b2b;-webkit-text-stroke:0.1px currentColor;">Station #</span>
<span class="t" style="left:884.50px;top:431.33px;font-size:11.6px;line-height:14px;color:#2b2b2b;transform:scaleX(1.0120);-webkit-text-stroke:0.1px currentColor;">Vol Beg Date</span>
<span class="t" style="left:968.10px;top:431.33px;font-size:11.6px;line-height:14px;color:#2b2b2b;transform:scaleX(1.0120);-webkit-text-stroke:0.1px currentColor;">Vol End Date</span>
<span class="t" style="left:1050.90px;top:431.33px;font-size:11.6px;line-height:14px;color:#2b2b2b;transform:scaleX(0.9565);-webkit-text-stroke:0.1px currentColor;">Seq#</span>
<span class="t" style="left:1082.30px;top:431.33px;font-size:11.6px;line-height:14px;color:#2b2b2b;transform:scaleX(1.0175);-webkit-text-stroke:0.1px currentColor;">HV Factor</span>
<span class="t" style="left:1152.00px;top:431.33px;font-size:11.6px;line-height:14px;color:#2b2b2b;-webkit-text-stroke:0.1px currentColor;">Volume</span>
<span class="t" style="left:1218.30px;top:431.33px;font-size:11.6px;line-height:14px;color:#2b2b2b;-webkit-text-stroke:0.1px currentColor;">Energy</span>
<span class="t" style="left:1302.30px;top:431.33px;font-size:11.6px;line-height:14px;color:#2b2b2b;transform:scaleX(0.9904);-webkit-text-stroke:0.1px currentColor;">Prod Date</span>
<span class="t" style="left:1384.60px;top:431.33px;font-size:11.6px;line-height:14px;color:#2b2b2b;transform:scaleX(1.0185);-webkit-text-stroke:0.1px currentColor;">Chart Start</span>
<div class="clip" style="left:1460px;top:429.2px;width:37.200000000000045px;height:18.0px"><span class="t" style="left:12.30px;top:2.13px;font-size:11.6px;line-height:14px;color:#2b2b2b;transform:scaleX(0.9904);-webkit-text-stroke:0.1px currentColor;">Chart End</span></div>
<span class="t" style="left:691.10px;top:452.13px;font-size:11.6px;line-height:14px;color:#2b2b2b;transform:scaleX(1.0059);-webkit-text-stroke:0.1px currentColor;">BRDGL...</span>
<span class="t" style="left:746.60px;top:452.13px;font-size:11.6px;line-height:14px;color:#2b2b2b;transform:scaleX(0.9667);-webkit-text-stroke:0.1px currentColor;">840069</span>
<span class="t" style="left:884.50px;top:452.13px;font-size:11.6px;line-height:14px;color:#2b2b2b;transform:scaleX(0.9788);-webkit-text-stroke:0.1px currentColor;">04/02/2016</span>
<span class="t" style="left:968.10px;top:452.13px;font-size:11.6px;line-height:14px;color:#2b2b2b;transform:scaleX(0.9891);-webkit-text-stroke:0.1px currentColor;">04/02/2016</span>
<span class="t" style="left:1052.70px;top:452.13px;font-size:11.6px;line-height:14px;color:#2b2b2b;transform:scaleX(1.0073);-webkit-text-stroke:0.1px currentColor;">2</span>
<span class="t" style="left:1090.00px;top:452.13px;font-size:11.6px;line-height:14px;color:#2b2b2b;transform:scaleX(0.9535);-webkit-text-stroke:0.1px currentColor;">1.0110</span>
<span class="t" style="left:1159.90px;top:452.13px;font-size:11.6px;line-height:14px;color:#2b2b2b;transform:scaleX(0.9857);-webkit-text-stroke:0.1px currentColor;">0.000</span>
<span class="t" style="left:1239.20px;top:452.13px;font-size:11.6px;line-height:14px;color:#2b2b2b;transform:scaleX(0.9857);-webkit-text-stroke:0.1px currentColor;">0.000</span>
<span class="t" style="left:1293.20px;top:452.13px;font-size:11.6px;line-height:14px;color:#2b2b2b;transform:scaleX(0.9805);-webkit-text-stroke:0.1px currentColor;">04/01/2016</span>
<span class="t" style="left:1378.40px;top:452.13px;font-size:11.6px;line-height:14px;color:#2b2b2b;transform:scaleX(0.9753);-webkit-text-stroke:0.1px currentColor;">04/02/2016</span>
<div class="clip" style="left:1455px;top:450px;width:43px;height:18px"><span class="t" style="left:8.00px;top:2.13px;font-size:11.6px;line-height:14px;color:#2b2b2b;transform:scaleX(0.9822);-webkit-text-stroke:0.1px currentColor;">04/03/2016</span></div>
<div class="clip" style="left:686.6px;top:481.4px;width:811.4px;height:15.600000000000023px"><span class="t" style="left:31.90px;top:3.13px;font-size:11.6px;line-height:14px;color:#2b2b2b;transform:scaleX(0.9884);-webkit-text-stroke:0.1px currentColor;">Flow Date</span></div>
<div class="clip" style="left:686.6px;top:481.4px;width:811.4px;height:15.600000000000023px"><span class="t" style="left:110.40px;top:3.13px;font-size:11.6px;line-height:14px;color:#2b2b2b;transform:scaleX(0.9750);-webkit-text-stroke:0.1px currentColor;">Seq#</span></div>
<div class="clip" style="left:686.6px;top:481.4px;width:811.4px;height:15.600000000000023px"><span class="t" style="left:185.80px;top:3.13px;font-size:11.6px;line-height:14px;color:#2b2b2b;transform:scaleX(0.9826);-webkit-text-stroke:0.1px currentColor;">Volume</span></div>
<div class="clip" style="left:686.6px;top:481.4px;width:811.4px;height:15.600000000000023px"><span class="t" style="left:278.20px;top:3.13px;font-size:11.6px;line-height:14px;color:#2b2b2b;transform:scaleX(1.0379);-webkit-text-stroke:0.1px currentColor;">Dry Energy</span></div>
<div class="clip" style="left:686.6px;top:481.4px;width:811.4px;height:15.600000000000023px"><span class="t" style="left:356.80px;top:3.13px;font-size:11.6px;line-height:14px;color:#2b2b2b;transform:scaleX(1.0213);-webkit-text-stroke:0.1px currentColor;">HV Factor</span></div>
<div class="clip" style="left:686.6px;top:481.4px;width:811.4px;height:15.600000000000023px"><span class="t" style="left:419.40px;top:3.13px;font-size:11.6px;line-height:14px;color:#2b2b2b;-webkit-text-stroke:0.1px currentColor;">Sat Basis</span></div>
<div class="clip" style="left:686.6px;top:481.4px;width:811.4px;height:15.600000000000023px"><span class="t" style="left:476.60px;top:3.13px;font-size:11.6px;line-height:14px;color:#2b2b2b;transform:scaleX(1.0094);-webkit-text-stroke:0.1px currentColor;">Sat Energy</span></div>
<div class="clip" style="left:686.6px;top:481.4px;width:811.4px;height:15.600000000000023px"><span class="t" style="left:540.60px;top:3.13px;font-size:11.6px;line-height:14px;color:#2b2b2b;transform:scaleX(1.0173);-webkit-text-stroke:0.1px currentColor;">Act Energy</span></div>
<div class="clip" style="left:686.6px;top:481.4px;width:811.4px;height:15.600000000000023px"><span class="t" style="left:604.10px;top:3.13px;font-size:11.6px;line-height:14px;color:#2b2b2b;transform:scaleX(1.0076);-webkit-text-stroke:0.1px currentColor;">Wo Sat</span></div>
<div class="clip" style="left:686.6px;top:481.4px;width:811.4px;height:15.600000000000023px"><span class="t" style="left:649.20px;top:3.13px;font-size:11.6px;line-height:14px;color:#2b2b2b;transform:scaleX(1.0461);-webkit-text-stroke:0.1px currentColor;">Wo Act</span></div>
<div class="clip" style="left:686.6px;top:481.4px;width:811.4px;height:15.600000000000023px"><span class="t" style="left:694.50px;top:3.13px;font-size:11.6px;line-height:14px;color:#2b2b2b;transform:scaleX(1.0485);-webkit-text-stroke:0.1px currentColor;">Wo Dry</span></div>
<div class="clip" style="left:686.6px;top:481.4px;width:811.4px;height:15.600000000000023px"><span class="t" style="left:740.60px;top:3.13px;font-size:11.6px;line-height:14px;color:#2b2b2b;transform:scaleX(0.9859);-webkit-text-stroke:0.1px currentColor;">Water Vapor</span></div>
<span class="t" style="left:722.90px;top:501.93px;font-size:11.6px;line-height:14px;color:#2b2b2b;-webkit-text-stroke:0.1px currentColor;">04/02/2016</span>
<span class="t" style="left:806.80px;top:501.93px;font-size:11.6px;line-height:14px;color:#2b2b2b;transform:scaleX(0.9453);-webkit-text-stroke:0.1px currentColor;">3</span>
<span class="t" style="left:907.30px;top:501.93px;font-size:11.6px;line-height:14px;color:#2b2b2b;transform:scaleX(0.9857);-webkit-text-stroke:0.1px currentColor;">0.000</span>
<span class="t" style="left:1011.70px;top:501.93px;font-size:11.6px;line-height:14px;color:#2b2b2b;transform:scaleX(0.9857);-webkit-text-stroke:0.1px currentColor;">0.000</span>
<span class="t" style="left:1053.60px;top:501.93px;font-size:11.6px;line-height:14px;color:#2b2b2b;transform:scaleX(0.9670);-webkit-text-stroke:0.1px currentColor;">1.0000</span>
<span class="t" style="left:1116.00px;top:501.93px;font-size:11.6px;line-height:14px;color:#2b2b2b;transform:scaleX(1.0149);-webkit-text-stroke:0.1px currentColor;">D</span>
<span class="t" style="left:1179.10px;top:501.93px;font-size:11.6px;line-height:14px;color:#2b2b2b;transform:scaleX(0.9448);-webkit-text-stroke:0.1px currentColor;">1.0110</span>
<span class="t" style="left:1241.30px;top:501.93px;font-size:11.6px;line-height:14px;color:#2b2b2b;transform:scaleX(0.9506);-webkit-text-stroke:0.1px currentColor;">1.0110</span>
<span class="t" style="left:1296.90px;top:501.93px;font-size:11.6px;line-height:14px;color:#2b2b2b;transform:scaleX(0.9391);-webkit-text-stroke:0.1px currentColor;">1.0110</span>
<span class="t" style="left:1343.00px;top:501.93px;font-size:11.6px;line-height:14px;color:#2b2b2b;transform:scaleX(0.9391);-webkit-text-stroke:0.1px currentColor;">1.0110</span>
<span class="t" style="left:1389.10px;top:501.93px;font-size:11.6px;line-height:14px;color:#2b2b2b;transform:scaleX(0.9448);-webkit-text-stroke:0.1px currentColor;">1.0110</span>
<div class="clip" style="left:1488px;top:499.8px;width:10px;height:17.999999999999943px"><span class="t" style="left:5.00px;top:2.13px;font-size:11.6px;line-height:14px;color:#2b2b2b;transform:scaleX(1.0291);-webkit-text-stroke:0.1px currentColor;">T</span></div>
<span class="t" style="left:907.30px;top:523.33px;font-size:11.6px;line-height:14px;color:#2b2b2b;transform:scaleX(0.9857);-webkit-text-stroke:0.1px currentColor;">0.000</span>
<span class="t" style="left:1011.70px;top:524.73px;font-size:11.6px;line-height:14px;color:#2b2b2b;transform:scaleX(0.9857);-webkit-text-stroke:0.1px currentColor;">0.000</span>
<span class="t" style="left:696.30px;top:546.33px;font-size:11.6px;line-height:14px;color:#2b2b2b;transform:scaleX(1.0366);-webkit-text-stroke:0.1px currentColor;">Facility</span>
<span class="t" style="left:793.20px;top:546.33px;font-size:11.6px;line-height:14px;color:#2b2b2b;-webkit-text-stroke:0.1px currentColor;">Station #</span>
<span class="t" style="left:884.50px;top:546.33px;font-size:11.6px;line-height:14px;color:#2b2b2b;transform:scaleX(1.0120);-webkit-text-stroke:0.1px currentColor;">Vol Beg Date</span>
<span class="t" style="left:968.10px;top:546.33px;font-size:11.6px;line-height:14px;color:#2b2b2b;transform:scaleX(1.0120);-webkit-text-stroke:0.1px currentColor;">Vol End Date</span>
<span class="t" style="left:1050.90px;top:546.33px;font-size:11.6px;line-height:14px;color:#2b2b2b;transform:scaleX(0.9565);-webkit-text-stroke:0.1px currentColor;">Seq#</span>
<span class="t" style="left:1082.30px;top:546.33px;font-size:11.6px;line-height:14px;color:#2b2b2b;transform:scaleX(1.0175);-webkit-text-stroke:0.1px currentColor;">HV Factor</span>
<span class="t" style="left:1152.00px;top:546.33px;font-size:11.6px;line-height:14px;color:#2b2b2b;-webkit-text-stroke:0.1px currentColor;">Volume</span>
<span class="t" style="left:1218.30px;top:546.33px;font-size:11.6px;line-height:14px;color:#2b2b2b;-webkit-text-stroke:0.1px currentColor;">Energy</span>
<span class="t" style="left:1302.30px;top:546.33px;font-size:11.6px;line-height:14px;color:#2b2b2b;transform:scaleX(0.9904);-webkit-text-stroke:0.1px currentColor;">Prod Date</span>
<span class="t" style="left:1384.60px;top:546.33px;font-size:11.6px;line-height:14px;color:#2b2b2b;transform:scaleX(1.0185);-webkit-text-stroke:0.1px currentColor;">Chart Start</span>
<div class="clip" style="left:1460px;top:544.2px;width:37.200000000000045px;height:18.0px"><span class="t" style="left:12.30px;top:2.13px;font-size:11.6px;line-height:14px;color:#2b2b2b;transform:scaleX(0.9904);-webkit-text-stroke:0.1px currentColor;">Chart End</span></div>
<span class="t" style="left:691.10px;top:567.13px;font-size:11.6px;line-height:14px;color:#2b2b2b;transform:scaleX(1.0059);-webkit-text-stroke:0.1px currentColor;">BRDGL...</span>
<span class="t" style="left:746.60px;top:567.13px;font-size:11.6px;line-height:14px;color:#2b2b2b;transform:scaleX(0.9667);-webkit-text-stroke:0.1px currentColor;">840069</span>
<span class="t" style="left:884.50px;top:567.13px;font-size:11.6px;line-height:14px;color:#2b2b2b;transform:scaleX(0.9788);-webkit-text-stroke:0.1px currentColor;">04/03/2016</span>
<span class="t" style="left:968.10px;top:567.13px;font-size:11.6px;line-height:14px;color:#2b2b2b;transform:scaleX(0.9891);-webkit-text-stroke:0.1px currentColor;">04/03/2016</span>
<span class="t" style="left:1052.70px;top:567.13px;font-size:11.6px;line-height:14px;color:#2b2b2b;transform:scaleX(1.0073);-webkit-text-stroke:0.1px currentColor;">3</span>
<span class="t" style="left:1090.00px;top:567.13px;font-size:11.6px;line-height:14px;color:#2b2b2b;transform:scaleX(0.9304);-webkit-text-stroke:0.1px currentColor;">1.0140</span>
<span class="t" style="left:1145.60px;top:567.13px;font-size:11.6px;line-height:14px;color:#2b2b2b;transform:scaleX(0.9857);-webkit-text-stroke:0.1px currentColor;">12,956.000</span>
<span class="t" style="left:1224.90px;top:567.13px;font-size:11.6px;line-height:14px;color:#2b2b2b;transform:scaleX(0.9857);-webkit-text-stroke:0.1px currentColor;">13,141.000</span>
<span class="t" style="left:1293.20px;top:567.13px;font-size:11.6px;line-height:14px;color:#2b2b2b;transform:scaleX(0.9805);-webkit-text-stroke:0.1px currentColor;">04/01/2016</span>
<span class="t" style="left:1378.40px;top:567.13px;font-size:11.6px;line-height:14px;color:#2b2b2b;transform:scaleX(0.9753);-webkit-text-stroke:0.1px currentColor;">04/03/2016</span>
<div class="clip" style="left:1455px;top:565px;width:43px;height:18px"><span class="t" style="left:8.00px;top:2.13px;font-size:11.6px;line-height:14px;color:#2b2b2b;transform:scaleX(0.9822);-webkit-text-stroke:0.1px currentColor;">04/04/2016</span></div>
<div class="clip" style="left:686.6px;top:596.4px;width:811.4px;height:15.600000000000023px"><span class="t" style="left:31.90px;top:3.13px;font-size:11.6px;line-height:14px;color:#2b2b2b;transform:scaleX(0.9884);-webkit-text-stroke:0.1px currentColor;">Flow Date</span></div>
<div class="clip" style="left:686.6px;top:596.4px;width:811.4px;height:15.600000000000023px"><span class="t" style="left:110.40px;top:3.13px;font-size:11.6px;line-height:14px;color:#2b2b2b;transform:scaleX(0.9750);-webkit-text-stroke:0.1px currentColor;">Seq#</span></div>
<div class="clip" style="left:686.6px;top:596.4px;width:811.4px;height:15.600000000000023px"><span class="t" style="left:185.80px;top:3.13px;font-size:11.6px;line-height:14px;color:#2b2b2b;transform:scaleX(0.9826);-webkit-text-stroke:0.1px currentColor;">Volume</span></div>
<div class="clip" style="left:686.6px;top:596.4px;width:811.4px;height:15.600000000000023px"><span class="t" style="left:278.20px;top:3.13px;font-size:11.6px;line-height:14px;color:#2b2b2b;transform:scaleX(1.0379);-webkit-text-stroke:0.1px currentColor;">Dry Energy</span></div>
<div class="clip" style="left:686.6px;top:596.4px;width:811.4px;height:15.600000000000023px"><span class="t" style="left:356.80px;top:3.13px;font-size:11.6px;line-height:14px;color:#2b2b2b;transform:scaleX(1.0213);-webkit-text-stroke:0.1px currentColor;">HV Factor</span></div>
<div class="clip" style="left:686.6px;top:596.4px;width:811.4px;height:15.600000000000023px"><span class="t" style="left:419.40px;top:3.13px;font-size:11.6px;line-height:14px;color:#2b2b2b;-webkit-text-stroke:0.1px currentColor;">Sat Basis</span></div>
<div class="clip" style="left:686.6px;top:596.4px;width:811.4px;height:15.600000000000023px"><span class="t" style="left:476.60px;top:3.13px;font-size:11.6px;line-height:14px;color:#2b2b2b;transform:scaleX(1.0094);-webkit-text-stroke:0.1px currentColor;">Sat Energy</span></div>
<div class="clip" style="left:686.6px;top:596.4px;width:811.4px;height:15.600000000000023px"><span class="t" style="left:540.60px;top:3.13px;font-size:11.6px;line-height:14px;color:#2b2b2b;transform:scaleX(1.0173);-webkit-text-stroke:0.1px currentColor;">Act Energy</span></div>
<div class="clip" style="left:686.6px;top:596.4px;width:811.4px;height:15.600000000000023px"><span class="t" style="left:604.10px;top:3.13px;font-size:11.6px;line-height:14px;color:#2b2b2b;transform:scaleX(1.0076);-webkit-text-stroke:0.1px currentColor;">Wo Sat</span></div>
<div class="clip" style="left:686.6px;top:596.4px;width:811.4px;height:15.600000000000023px"><span class="t" style="left:649.20px;top:3.13px;font-size:11.6px;line-height:14px;color:#2b2b2b;transform:scaleX(1.0461);-webkit-text-stroke:0.1px currentColor;">Wo Act</span></div>
<div class="clip" style="left:686.6px;top:596.4px;width:811.4px;height:15.600000000000023px"><span class="t" style="left:694.50px;top:3.13px;font-size:11.6px;line-height:14px;color:#2b2b2b;transform:scaleX(1.0485);-webkit-text-stroke:0.1px currentColor;">Wo Dry</span></div>
<div class="clip" style="left:686.6px;top:596.4px;width:811.4px;height:15.600000000000023px"><span class="t" style="left:740.60px;top:3.13px;font-size:11.6px;line-height:14px;color:#2b2b2b;transform:scaleX(0.9859);-webkit-text-stroke:0.1px currentColor;">Water Vapor</span></div>
<span class="t" style="left:722.90px;top:616.93px;font-size:11.6px;line-height:14px;color:#2b2b2b;-webkit-text-stroke:0.1px currentColor;">04/03/2016</span>
<span class="t" style="left:806.80px;top:616.93px;font-size:11.6px;line-height:14px;color:#2b2b2b;transform:scaleX(0.9453);-webkit-text-stroke:0.1px currentColor;">3</span>
<span class="t" style="left:878.70px;top:616.93px;font-size:11.6px;line-height:14px;color:#2b2b2b;transform:scaleX(0.9857);-webkit-text-stroke:0.1px currentColor;">12,956.000</span>
<span class="t" style="left:983.10px;top:616.93px;font-size:11.6px;line-height:14px;color:#2b2b2b;transform:scaleX(0.9857);-webkit-text-stroke:0.1px currentColor;">13,141.000</span>
<span class="t" style="left:1053.60px;top:616.93px;font-size:11.6px;line-height:14px;color:#2b2b2b;transform:scaleX(0.9670);-webkit-text-stroke:0.1px currentColor;">1.0143</span>
<span class="t" style="left:1116.00px;top:616.93px;font-size:11.6px;line-height:14px;color:#2b2b2b;transform:scaleX(1.0149);-webkit-text-stroke:0.1px currentColor;">D</span>
<span class="t" style="left:1179.10px;top:616.93px;font-size:11.6px;line-height:14px;color:#2b2b2b;transform:scaleX(0.9219);-webkit-text-stroke:0.1px currentColor;">1.0140</span>
<span class="t" style="left:1241.30px;top:616.93px;font-size:11.6px;line-height:14px;color:#2b2b2b;transform:scaleX(0.9276);-webkit-text-stroke:0.1px currentColor;">1.0140</span>
<span class="t" style="left:1296.90px;top:616.93px;font-size:11.6px;line-height:14px;color:#2b2b2b;transform:scaleX(0.9163);-webkit-text-stroke:0.1px currentColor;">1.0140</span>
<span class="t" style="left:1343.00px;top:616.93px;font-size:11.6px;line-height:14px;color:#2b2b2b;transform:scaleX(0.9163);-webkit-text-stroke:0.1px currentColor;">1.0140</span>
<span class="t" style="left:1389.10px;top:616.93px;font-size:11.6px;line-height:14px;color:#2b2b2b;transform:scaleX(0.9219);-webkit-text-stroke:0.1px currentColor;">1.0140</span>
<div class="clip" style="left:1488px;top:614.8px;width:10px;height:18.0px"><span class="t" style="left:5.00px;top:2.13px;font-size:11.6px;line-height:14px;color:#2b2b2b;transform:scaleX(1.0291);-webkit-text-stroke:0.1px currentColor;">T</span></div>
<span class="t" style="left:878.70px;top:638.33px;font-size:11.6px;line-height:14px;color:#2b2b2b;transform:scaleX(0.9857);-webkit-text-stroke:0.1px currentColor;">12,956.000</span>
<span class="t" style="left:983.10px;top:639.73px;font-size:11.6px;line-height:14px;color:#2b2b2b;transform:scaleX(0.9857);-webkit-text-stroke:0.1px currentColor;">13,141.000</span>
<span class="t" style="left:696.30px;top:661.33px;font-size:11.6px;line-height:14px;color:#2b2b2b;transform:scaleX(1.0366);-webkit-text-stroke:0.1px currentColor;">Facility</span>
<span class="t" style="left:793.20px;top:661.33px;font-size:11.6px;line-height:14px;color:#2b2b2b;-webkit-text-stroke:0.1px currentColor;">Station #</span>
<span class="t" style="left:884.50px;top:661.33px;font-size:11.6px;line-height:14px;color:#2b2b2b;transform:scaleX(1.0120);-webkit-text-stroke:0.1px currentColor;">Vol Beg Date</span>
<span class="t" style="left:968.10px;top:661.33px;font-size:11.6px;line-height:14px;color:#2b2b2b;transform:scaleX(1.0120);-webkit-text-stroke:0.1px currentColor;">Vol End Date</span>
<span class="t" style="left:1050.90px;top:661.33px;font-size:11.6px;line-height:14px;color:#2b2b2b;transform:scaleX(0.9565);-webkit-text-stroke:0.1px currentColor;">Seq#</span>
<span class="t" style="left:1082.30px;top:661.33px;font-size:11.6px;line-height:14px;color:#2b2b2b;transform:scaleX(1.0175);-webkit-text-stroke:0.1px currentColor;">HV Factor</span>
<span class="t" style="left:1152.00px;top:661.33px;font-size:11.6px;line-height:14px;color:#2b2b2b;-webkit-text-stroke:0.1px currentColor;">Volume</span>
<span class="t" style="left:1218.30px;top:661.33px;font-size:11.6px;line-height:14px;color:#2b2b2b;-webkit-text-stroke:0.1px currentColor;">Energy</span>
<span class="t" style="left:1302.30px;top:661.33px;font-size:11.6px;line-height:14px;color:#2b2b2b;transform:scaleX(0.9904);-webkit-text-stroke:0.1px currentColor;">Prod Date</span>
<span class="t" style="left:1384.60px;top:661.33px;font-size:11.6px;line-height:14px;color:#2b2b2b;transform:scaleX(1.0185);-webkit-text-stroke:0.1px currentColor;">Chart Start</span>
<div class="clip" style="left:1460px;top:659.2px;width:37.200000000000045px;height:18.0px"><span class="t" style="left:12.30px;top:2.13px;font-size:11.6px;line-height:14px;color:#2b2b2b;transform:scaleX(0.9904);-webkit-text-stroke:0.1px currentColor;">Chart End</span></div>
<span class="t" style="left:691.10px;top:682.13px;font-size:11.6px;line-height:14px;color:#2b2b2b;transform:scaleX(1.0059);-webkit-text-stroke:0.1px currentColor;">BRDGL...</span>
<span class="t" style="left:746.60px;top:682.13px;font-size:11.6px;line-height:14px;color:#2b2b2b;transform:scaleX(0.9667);-webkit-text-stroke:0.1px currentColor;">840069</span>
<span class="t" style="left:884.50px;top:682.13px;font-size:11.6px;line-height:14px;color:#2b2b2b;transform:scaleX(0.9788);-webkit-text-stroke:0.1px currentColor;">04/04/2016</span>
<span class="t" style="left:968.10px;top:682.13px;font-size:11.6px;line-height:14px;color:#2b2b2b;transform:scaleX(0.9891);-webkit-text-stroke:0.1px currentColor;">04/04/2016</span>
<span class="t" style="left:1052.70px;top:682.13px;font-size:11.6px;line-height:14px;color:#2b2b2b;transform:scaleX(1.0073);-webkit-text-stroke:0.1px currentColor;">3</span>
<span class="t" style="left:1090.00px;top:682.13px;font-size:11.6px;line-height:14px;color:#2b2b2b;transform:scaleX(0.9304);-webkit-text-stroke:0.1px currentColor;">1.0120</span>
<span class="t" style="left:1145.60px;top:682.13px;font-size:11.6px;line-height:14px;color:#2b2b2b;transform:scaleX(0.9857);-webkit-text-stroke:0.1px currentColor;">13,834.000</span>
<span class="t" style="left:1224.90px;top:682.13px;font-size:11.6px;line-height:14px;color:#2b2b2b;transform:scaleX(0.9857);-webkit-text-stroke:0.1px currentColor;">13,992.000</span>
<span class="t" style="left:1293.20px;top:682.13px;font-size:11.6px;line-height:14px;color:#2b2b2b;transform:scaleX(0.9805);-webkit-text-stroke:0.1px currentColor;">04/01/2016</span>
<span class="t" style="left:1378.40px;top:682.13px;font-size:11.6px;line-height:14px;color:#2b2b2b;transform:scaleX(0.9753);-webkit-text-stroke:0.1px currentColor;">04/04/2016</span>
<div class="clip" style="left:1455px;top:680px;width:43px;height:18px"><span class="t" style="left:8.00px;top:2.13px;font-size:11.6px;line-height:14px;color:#2b2b2b;transform:scaleX(0.9822);-webkit-text-stroke:0.1px currentColor;">04/05/2016</span></div>
<div class="clip" style="left:686.6px;top:711.4px;width:811.4px;height:15.600000000000023px"><span class="t" style="left:31.90px;top:3.13px;font-size:11.6px;line-height:14px;color:#2b2b2b;transform:scaleX(0.9884);-webkit-text-stroke:0.1px currentColor;">Flow Date</span></div>
<div class="clip" style="left:686.6px;top:711.4px;width:811.4px;height:15.600000000000023px"><span class="t" style="left:110.40px;top:3.13px;font-size:11.6px;line-height:14px;color:#2b2b2b;transform:scaleX(0.9750);-webkit-text-stroke:0.1px currentColor;">Seq#</span></div>
<div class="clip" style="left:686.6px;top:711.4px;width:811.4px;height:15.600000000000023px"><span class="t" style="left:185.80px;top:3.13px;font-size:11.6px;line-height:14px;color:#2b2b2b;transform:scaleX(0.9826);-webkit-text-stroke:0.1px currentColor;">Volume</span></div>
<div class="clip" style="left:686.6px;top:711.4px;width:811.4px;height:15.600000000000023px"><span class="t" style="left:278.20px;top:3.13px;font-size:11.6px;line-height:14px;color:#2b2b2b;transform:scaleX(1.0379);-webkit-text-stroke:0.1px currentColor;">Dry Energy</span></div>
<div class="clip" style="left:686.6px;top:711.4px;width:811.4px;height:15.600000000000023px"><span class="t" style="left:356.80px;top:3.13px;font-size:11.6px;line-height:14px;color:#2b2b2b;transform:scaleX(1.0213);-webkit-text-stroke:0.1px currentColor;">HV Factor</span></div>
<div class="clip" style="left:686.6px;top:711.4px;width:811.4px;height:15.600000000000023px"><span class="t" style="left:419.40px;top:3.13px;font-size:11.6px;line-height:14px;color:#2b2b2b;-webkit-text-stroke:0.1px currentColor;">Sat Basis</span></div>
<div class="clip" style="left:686.6px;top:711.4px;width:811.4px;height:15.600000000000023px"><span class="t" style="left:476.60px;top:3.13px;font-size:11.6px;line-height:14px;color:#2b2b2b;transform:scaleX(1.0094);-webkit-text-stroke:0.1px currentColor;">Sat Energy</span></div>
<div class="clip" style="left:686.6px;top:711.4px;width:811.4px;height:15.600000000000023px"><span class="t" style="left:540.60px;top:3.13px;font-size:11.6px;line-height:14px;color:#2b2b2b;transform:scaleX(1.0173);-webkit-text-stroke:0.1px currentColor;">Act Energy</span></div>
<div class="clip" style="left:686.6px;top:711.4px;width:811.4px;height:15.600000000000023px"><span class="t" style="left:604.10px;top:3.13px;font-size:11.6px;line-height:14px;color:#2b2b2b;transform:scaleX(1.0076);-webkit-text-stroke:0.1px currentColor;">Wo Sat</span></div>
<div class="clip" style="left:686.6px;top:711.4px;width:811.4px;height:15.600000000000023px"><span class="t" style="left:649.20px;top:3.13px;font-size:11.6px;line-height:14px;color:#2b2b2b;transform:scaleX(1.0461);-webkit-text-stroke:0.1px currentColor;">Wo Act</span></div>
<div class="clip" style="left:686.6px;top:711.4px;width:811.4px;height:15.600000000000023px"><span class="t" style="left:694.50px;top:3.13px;font-size:11.6px;line-height:14px;color:#2b2b2b;transform:scaleX(1.0485);-webkit-text-stroke:0.1px currentColor;">Wo Dry</span></div>
<div class="clip" style="left:686.6px;top:711.4px;width:811.4px;height:15.600000000000023px"><span class="t" style="left:740.60px;top:3.13px;font-size:11.6px;line-height:14px;color:#2b2b2b;transform:scaleX(0.9859);-webkit-text-stroke:0.1px currentColor;">Water Vapor</span></div>
<span class="t" style="left:722.90px;top:731.93px;font-size:11.6px;line-height:14px;color:#2b2b2b;-webkit-text-stroke:0.1px currentColor;">04/04/2016</span>
<span class="t" style="left:806.80px;top:731.93px;font-size:11.6px;line-height:14px;color:#2b2b2b;transform:scaleX(0.9453);-webkit-text-stroke:0.1px currentColor;">3</span>
<span class="t" style="left:878.70px;top:731.93px;font-size:11.6px;line-height:14px;color:#2b2b2b;transform:scaleX(0.9857);-webkit-text-stroke:0.1px currentColor;">13,834.000</span>
<span class="t" style="left:983.10px;top:731.93px;font-size:11.6px;line-height:14px;color:#2b2b2b;transform:scaleX(0.9857);-webkit-text-stroke:0.1px currentColor;">13,992.000</span>
<span class="t" style="left:1053.60px;top:731.93px;font-size:11.6px;line-height:14px;color:#2b2b2b;transform:scaleX(0.9911);-webkit-text-stroke:0.1px currentColor;">1.0114</span>
<span class="t" style="left:1116.00px;top:731.93px;font-size:11.6px;line-height:14px;color:#2b2b2b;transform:scaleX(1.0149);-webkit-text-stroke:0.1px currentColor;">D</span>
<span class="t" style="left:1179.10px;top:731.93px;font-size:11.6px;line-height:14px;color:#2b2b2b;transform:scaleX(0.9219);-webkit-text-stroke:0.1px currentColor;">1.0120</span>
<span class="t" style="left:1241.30px;top:731.93px;font-size:11.6px;line-height:14px;color:#2b2b2b;transform:scaleX(0.9276);-webkit-text-stroke:0.1px currentColor;">1.0120</span>
<span class="t" style="left:1296.90px;top:731.93px;font-size:11.6px;line-height:14px;color:#2b2b2b;transform:scaleX(0.9163);-webkit-text-stroke:0.1px currentColor;">1.0120</span>
<span class="t" style="left:1343.00px;top:731.93px;font-size:11.6px;line-height:14px;color:#2b2b2b;transform:scaleX(0.9163);-webkit-text-stroke:0.1px currentColor;">1.0120</span>
<span class="t" style="left:1389.10px;top:731.93px;font-size:11.6px;line-height:14px;color:#2b2b2b;transform:scaleX(0.9219);-webkit-text-stroke:0.1px currentColor;">1.0120</span>
<div class="clip" style="left:1488px;top:729.8px;width:10px;height:18.0px"><span class="t" style="left:5.00px;top:2.13px;font-size:11.6px;line-height:14px;color:#2b2b2b;transform:scaleX(1.0291);-webkit-text-stroke:0.1px currentColor;">T</span></div>
<span class="t" style="left:878.70px;top:753.33px;font-size:11.6px;line-height:14px;color:#2b2b2b;transform:scaleX(0.9857);-webkit-text-stroke:0.1px currentColor;">13,834.000</span>
<span class="t" style="left:983.10px;top:754.73px;font-size:11.6px;line-height:14px;color:#2b2b2b;transform:scaleX(0.9857);-webkit-text-stroke:0.1px currentColor;">13,992.000</span>
<svg width="14" height="21" viewBox="0 0 14 21" style="left:1386px;top:731.5px"><path d="M1,1 V16.2 L4.6,12.8 L7.4,19.2 L9.8,18.1 L7,11.9 L11.8,11.9 Z" fill="#fff" stroke="#111" stroke-width="1.1" stroke-linejoin="miter"/></svg>
</div></body></html>
